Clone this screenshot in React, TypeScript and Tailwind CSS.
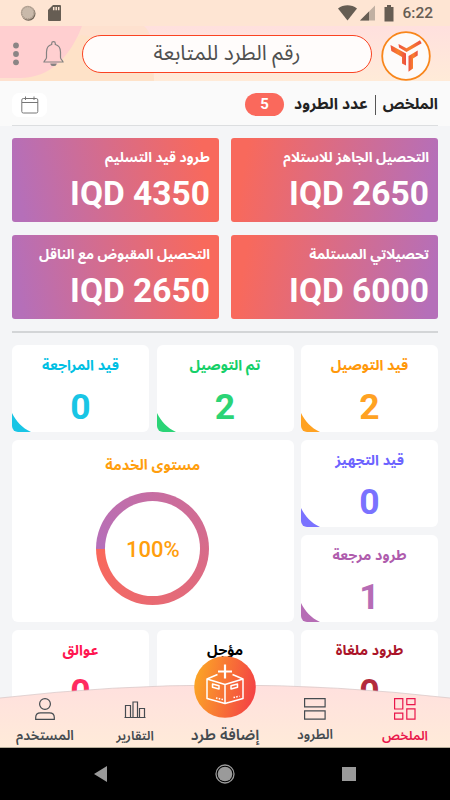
const arabic =
  "font-['Noto_Sans_Arabic','DejaVu_Sans_Condensed',sans-serif] whitespace-nowrap leading-none";

const totals = [
  { title: "التحصيل الجاهز للاستلام", value: "2650", flip: true },
  { title: "طرود قيد التسليم", value: "4350", flip: false },
  { title: "تحصيلاتي المستلمة", value: "6000", flip: true },
  { title: "التحصيل المقبوض مع الناقل", value: "2650", flip: false },
];

type StatProps = {
  title: string;
  value: string;
  color: string;
  corner?: boolean;
};

const StatCard = ({ title, value, color, corner = true }: StatProps) => {
  return (
    <article
      className={`relative flex h-[87px] flex-col items-center overflow-hidden rounded-[6px] bg-white pt-[13px] ${color}`}
    >
      <h3 className={`${arabic} flex h-[16px] items-center text-[14.3px] font-bold`}>{title}</h3>
      <p className="mt-[15px] font-[Roboto,sans-serif] text-[35.5px] leading-[36px] font-bold opacity-90">
        {value}
      </p>
      {corner && (
        <svg
          className="absolute bottom-0 left-0 opacity-90"
          width="20"
          height="19"
          viewBox="0 0 20 19"
          fill="currentColor"
        >
          <path d="M0 0C4 8 10 15 19 19H0Z" />
        </svg>
      )}
    </article>
  );
};

const StatusBar = () => {
  return (
    <div className="flex h-[26px] items-center justify-between bg-[#fee5d3] pr-[17px] pl-[20px]" dir="ltr">
      <div className="flex items-center gap-[12px]">
        <svg width="16" height="16" viewBox="0 0 16 16">
          <circle cx="8.5" cy="8.7" r="7" fill="#6b6054" />
          <circle cx="7.8" cy="7.8" r="7" fill="#b9a899" />
          <circle cx="7.8" cy="7.8" r="6" fill="#c9b9aa" stroke="#a39384" strokeDasharray="1 1" />
        </svg>
        <svg width="13" height="16" viewBox="0 0 13 16">
          <path d="M5 0H12a1 1 0 0 1 1 1V15a1 1 0 0 1-1 1H1a1 1 0 0 1-1-1V5Z" fill="#665d53" />
          <path d="M5.7 2v3.200M8.200 2v3.200M10.700 2v3.200" stroke="#fee5d3" strokeWidth="1.500" />
        </svg>
      </div>
      <div className="flex items-center">
        <svg width="19" height="16" viewBox="0 0 19 16">
          <path d="M0 3.500C5.500-.8 13.500-.8 19 3.500L9.500 15.500Z" fill="#665d53" />
        </svg>
        <svg className="ml-[3px]" width="15" height="16" viewBox="0 0 15 16">
          <path d="M0 15.500 15 .5V15.500Z" fill="#c0b0a2" />
          <path d="M0 15.500 9 6.500V15.500Z" fill="#665d53" />
        </svg>
        <svg className="ml-[9px]" width="10" height="17" viewBox="0 0 10 17">
          <path d="M3 0h4v2h2.500v14.500h-9V2H3Z" fill="#665d53" />
        </svg>
        <span className="mt-[2px] ml-[8px] font-[Roboto,sans-serif] text-[15.5px] leading-none font-medium text-[#665d53]">
          6:22
        </span>
      </div>
    </div>
  );
};

const Logo = () => {
  return (
    <svg width="50" height="50" viewBox="0 0 50 50">
      <defs>
        <linearGradient id="logo" x1="0" x2="1">
          <stop offset="0" stopColor="#ee5340" />
          <stop offset=".5" stopColor="#f9822c" />
          <stop offset="1" stopColor="#ec4e42" />
        </linearGradient>
      </defs>
      <circle cx="25" cy="25" r="23.800" fill="#fdfbfa" stroke="#f8861b" strokeWidth="1.800" />
      <path d="M9.500 14 25 22.500V34.500L21 32.500V26L10.300 20Z" fill="url(#logo)" />
      <path d="M17.500 13 25.500 17.300 39 9.300 40.700 12.300 25.500 21 18 16.500Z" fill="url(#logo)" />
      <path d="M36.700 19.500V24.500L32 27.500V37.500L27.500 40.700V25Z" fill="url(#logo)" />
    </svg>
  );
};

const Header = () => {
  return (
    <header className="relative flex h-[55px] items-center bg-[linear-gradient(#ffe0de,#ffebd8)]" dir="ltr">
      <svg className="absolute inset-0" width="450" height="55" viewBox="0 0 450 55">
        <path d="M0 0H144C155 9 154 35 154 55H0Z" fill="#fee1cf" />
        <path d="M81 9C110 13 145 26 154 52V55H20Z" fill="#fee2c8" />
        <path d="M0 0H82C70 31 50 52 20 52H0Z" fill="#ffcfd0" />
      </svg>
      <svg className="relative ml-[12px]" width="8" height="24" viewBox="0 0 8 24" fill="#8b8585">
        <circle cx="4" cy="3.500" r="2.900" />
        <circle cx="4" cy="12" r="2.900" />
        <circle cx="4" cy="20.300" r="2.900" />
      </svg>
      <svg
        className="relative ml-[23px]"
        width="21"
        height="26"
        viewBox="0 0 21 26"
        fill="none"
        stroke="#858282"
        strokeWidth="1.200"
      >
        <path d="M8.700 3.500V2.500a1.800 1.800 0 0 1 3.600 0v1C16 4.500 17.500 7.500 17.500 11v5.500c0 2 2 2.500 2.500 4.500H1c.5-2 2.500-2.500 2.500-4.500V11C3.500 7.500 5 4.500 8.700 3.500Z" />
        <path d="M8 23h5c-.5 2-4.500 2-5 0Z" fill="#858282" />
      </svg>
      <div className="relative ml-[18px] flex h-[38px] w-[290px] items-center justify-center rounded-full border border-[#fa4322] bg-[#fffcfb]">
        <span className={`${arabic} text-[21px] text-[#505050]`} dir="rtl">
          رقم الطرد للمتابعة
        </span>
      </div>
      <div className="relative mt-[4px] ml-[9px]">
        <Logo />
      </div>
    </header>
  );
};

const SummaryBar = () => {
  return (
    <section className="bg-[#fafafa] px-3">
      <div className="flex h-[45px] items-center justify-between border-b border-[#dcdee0] pt-[3px]">
        <div className={`${arabic} flex items-center text-[15.2px] font-bold text-[#222]`}>
          <span>الملخص</span>
          <span className="mx-[7px] h-[20px] w-px bg-[#555]" />
          <span className="text-[15.7px]">عدد الطرود</span>
          <span className="mr-[10px] flex h-[23px] w-[39px] items-center justify-center rounded-full bg-[#fa695c] font-[Roboto,sans-serif] text-[15px] font-bold text-white">
            5
          </span>
        </div>
        <div className="flex h-[24px] w-[35px] items-center justify-center rounded-[7px] bg-white">
          <svg width="18" height="18" viewBox="0 0 18 18" fill="none" stroke="#777" strokeWidth="1">
            <rect x=".8" y="2.500" width="16" height="14.500" rx="1.500" />
            <path d="M1 6.500H17M4.500 .5v3.500M13 .5v3.500" />
          </svg>
        </div>
      </div>
    </section>
  );
};

const ServiceLevel = () => {
  return (
    <article className="col-span-2 row-span-2 flex flex-col items-center rounded-[6px] bg-white pt-[18px]">
      <h3 className={`${arabic} flex h-[16px] items-center text-[14.5px] font-bold text-[#ff9e0d]`}>
        مستوى الخدمة
      </h3>
      <div className="mt-[18px] flex size-[113px] items-center justify-center rounded-full bg-[conic-gradient(from_270deg,#b56fba,#fa685a)]">
        <div className="flex size-[95px] items-center justify-center rounded-full bg-white">
          <span
            className="mt-[2px] font-[Roboto,sans-serif] text-[22px] leading-none font-medium text-[#ff9e0d]"
            dir="ltr"
          >
            100%
          </span>
        </div>
      </div>
    </article>
  );
};

const AddParcelButton = () => {
  return (
    <svg width="62" height="62" viewBox="0 0 62 62">
      <defs>
        <linearGradient id="add" x1="0" x2="1" y1=".4" y2=".6">
          <stop offset="0" stopColor="#fba526" />
          <stop offset="1" stopColor="#f44145" />
        </linearGradient>
      </defs>
      <circle cx="31" cy="31" r="30.800" fill="url(#add)" />
      <g fill="none" stroke="#fff" strokeWidth="1.500" strokeLinejoin="round">
        <path d="M31 8.500v14M24 15.500h14" strokeWidth="2.200" />
        <path d="M23.500 18.500 13 23v19.500l18 5 18-5V23L38.500 18.500M13 23l18 5.500L49 23M31 28.500v19" />
        <path d="M18.500 28 25 29.700v3.300L18.500 31.300ZM43.500 28 37 29.700v3.300L43.500 31.300Z" />
        <path d="M22 42l7 1.500M39.500 41.500l6-1.300" strokeDasharray="1.500 1.300" />
      </g>
    </svg>
  );
};

const BottomNav = () => {
  const label = `${arabic} absolute top-[30px] flex h-[16px] items-center font-semibold`;

  return (
    <nav className="relative z-10 -mt-[63px] h-[63px] text-[#454b50]">
      <svg className="absolute inset-0" width="450" height="63" viewBox="0 0 450 63">
        <defs>
          <linearGradient id="nav" x1="0" x2="0" y1="0" y2="1">
            <stop offset="0" stopColor="#ffe0de" />
            <stop offset="1" stopColor="#ffebd9" />
          </linearGradient>
        </defs>
        <path d="M0 13Q112 0 225 0T450 13V63H0Z" fill="url(#nav)" />
        <path d="M0 13Q112 0 225 0T450 13" fill="none" stroke="#d6c4c4" strokeWidth=".7" />
        <path d="M0 62.500H450" stroke="#b5ad99" />
      </svg>
      <div className="absolute -top-[29px] left-[194px] h-[62px]">
        <AddParcelButton />
      </div>
      <div className="relative grid h-full grid-cols-5 pt-[13px]">
        <div className="relative flex justify-center text-[#e9164b]">
          <svg width="22" height="22" viewBox="0 0 22 22" fill="none" stroke="currentColor" strokeWidth="1.200">
            <path d="M.6.6h8.200v10.400H.6ZM12.800.6h8.200v6H12.800ZM.6 15.200h8.200v6H.6ZM12.800 10.800h8.200v10.400H12.800Z" />
          </svg>
          <span className={`${label} text-[13px]`}>الملخص</span>
        </div>
        <div className="relative flex justify-center">
          <svg width="22" height="22" viewBox="0 0 22 22" fill="none" stroke="currentColor" strokeWidth="1.200">
            <path d="M.6.6h20.500v8.300H.6ZM.6 12.800h20.500v8.400H.6Z" />
          </svg>
          <span className={`${label} text-[13.4px]`}>الطرود</span>
        </div>
        <div className="relative flex justify-center">
          <span className={`${label} text-[15.6px]`}>إضافة طرد</span>
        </div>
        <div className="relative flex justify-center">
          <svg width="22" height="22" viewBox="0 0 22 22" fill="none" stroke="currentColor" strokeWidth="1.200">
            <path d="M1.500 19.500V7.500h5v12M9 19.500V4h4.500v15.500M15.500 19.500V10.500h5v9M.5 19.500h21" />
          </svg>
          <span className={`${label} text-[13px]`}>التقارير</span>
        </div>
        <div className="relative flex justify-center">
          <svg width="20" height="22" viewBox="0 0 20 22" fill="none" stroke="currentColor" strokeWidth="1.200">
            <circle cx="10" cy="6" r="5.400" />
            <path d="M.7 21.300V19.500Q.7 14.800 5.500 14.800H14.500Q19.300 14.800 19.300 19.500V21.300Z" />
          </svg>
          <span className={`${label} text-[13.7px]`}>المستخدم</span>
        </div>
      </div>
    </nav>
  );
};

const SystemBar = () => {
  return (
    <div className="flex h-[52px] items-center justify-between bg-black pr-[94px] pl-[94px]" dir="ltr">
      <svg width="13" height="16" viewBox="0 0 13 16" fill="#9a9a9a">
        <path d="M13 0V16L0 8Z" />
      </svg>
      <svg width="20" height="20" viewBox="0 0 20 20">
        <circle cx="10" cy="10" r="9" fill="none" stroke="#9a9a9a" strokeWidth="1.300" />
        <circle cx="10" cy="10" r="7.300" fill="#9a9a9a" />
      </svg>
      <div className="size-[14px] bg-[#9a9a9a]" />
    </div>
  );
};

export default function App() {
  return (
    <div className="flex h-[800px] w-[450px] flex-col overflow-hidden bg-[#f4f5f7]" dir="rtl">
      <StatusBar />
      <Header />
      <SummaryBar />
      <main className="min-h-0 flex-1 overflow-hidden px-3 pt-[12px]">
        <section className="grid grid-cols-2 gap-x-[12px] gap-y-[13px]">
          {totals.map(({ title, value, flip }) => (
            <article
              key={title}
              className={`h-[84px] rounded-[3px] px-[9px] pt-[12px] text-white ${
                flip
                  ? "bg-[linear-gradient(100deg,#f8695c_8%,#b56fb9_95%)]"
                  : "bg-[linear-gradient(260deg,#f8695c_8%,#b56fb9_95%)]"
              }`}
            >
              <h2 className={`${arabic} flex h-[16px] items-center text-[13.8px] font-bold`}>{title}</h2>
              <p
                className="mt-[11px] text-right font-[Roboto,sans-serif] text-[33.5px] leading-[34px] font-bold"
                dir="ltr"
              >
                IQD {value}
              </p>
            </article>
          ))}
        </section>
        <hr className="mt-[12px] border-t-2 border-[#d3d5d7]" />
        <section className="mt-[12px] grid grid-cols-[137px_137px_137px] justify-between gap-y-[8px]">
          <StatCard title="قيد التوصيل" value="2" color="text-[#ff980a]" />
          <StatCard title="تم التوصيل" value="2" color="text-[#15d068]" />
          <StatCard title="قيد المراجعة" value="0" color="text-[#00bfe3]" />
          <StatCard title="قيد التجهيز" value="0" color="text-[#6c63ff]" />
          <ServiceLevel />
          <StatCard title="طرود مرجعة" value="1" color="text-[#af5cad]" />
          <StatCard title="طرود ملغاة" value="0" color="text-[#ab1429]" corner={false} />
          <StatCard title="مؤجل" value="" color="text-black" corner={false} />
          <StatCard title="عوالق" value="0" color="text-[#ff1550]" corner={false} />
        </section>
      </main>
      <BottomNav />
      <SystemBar />
    </div>
  );
}
